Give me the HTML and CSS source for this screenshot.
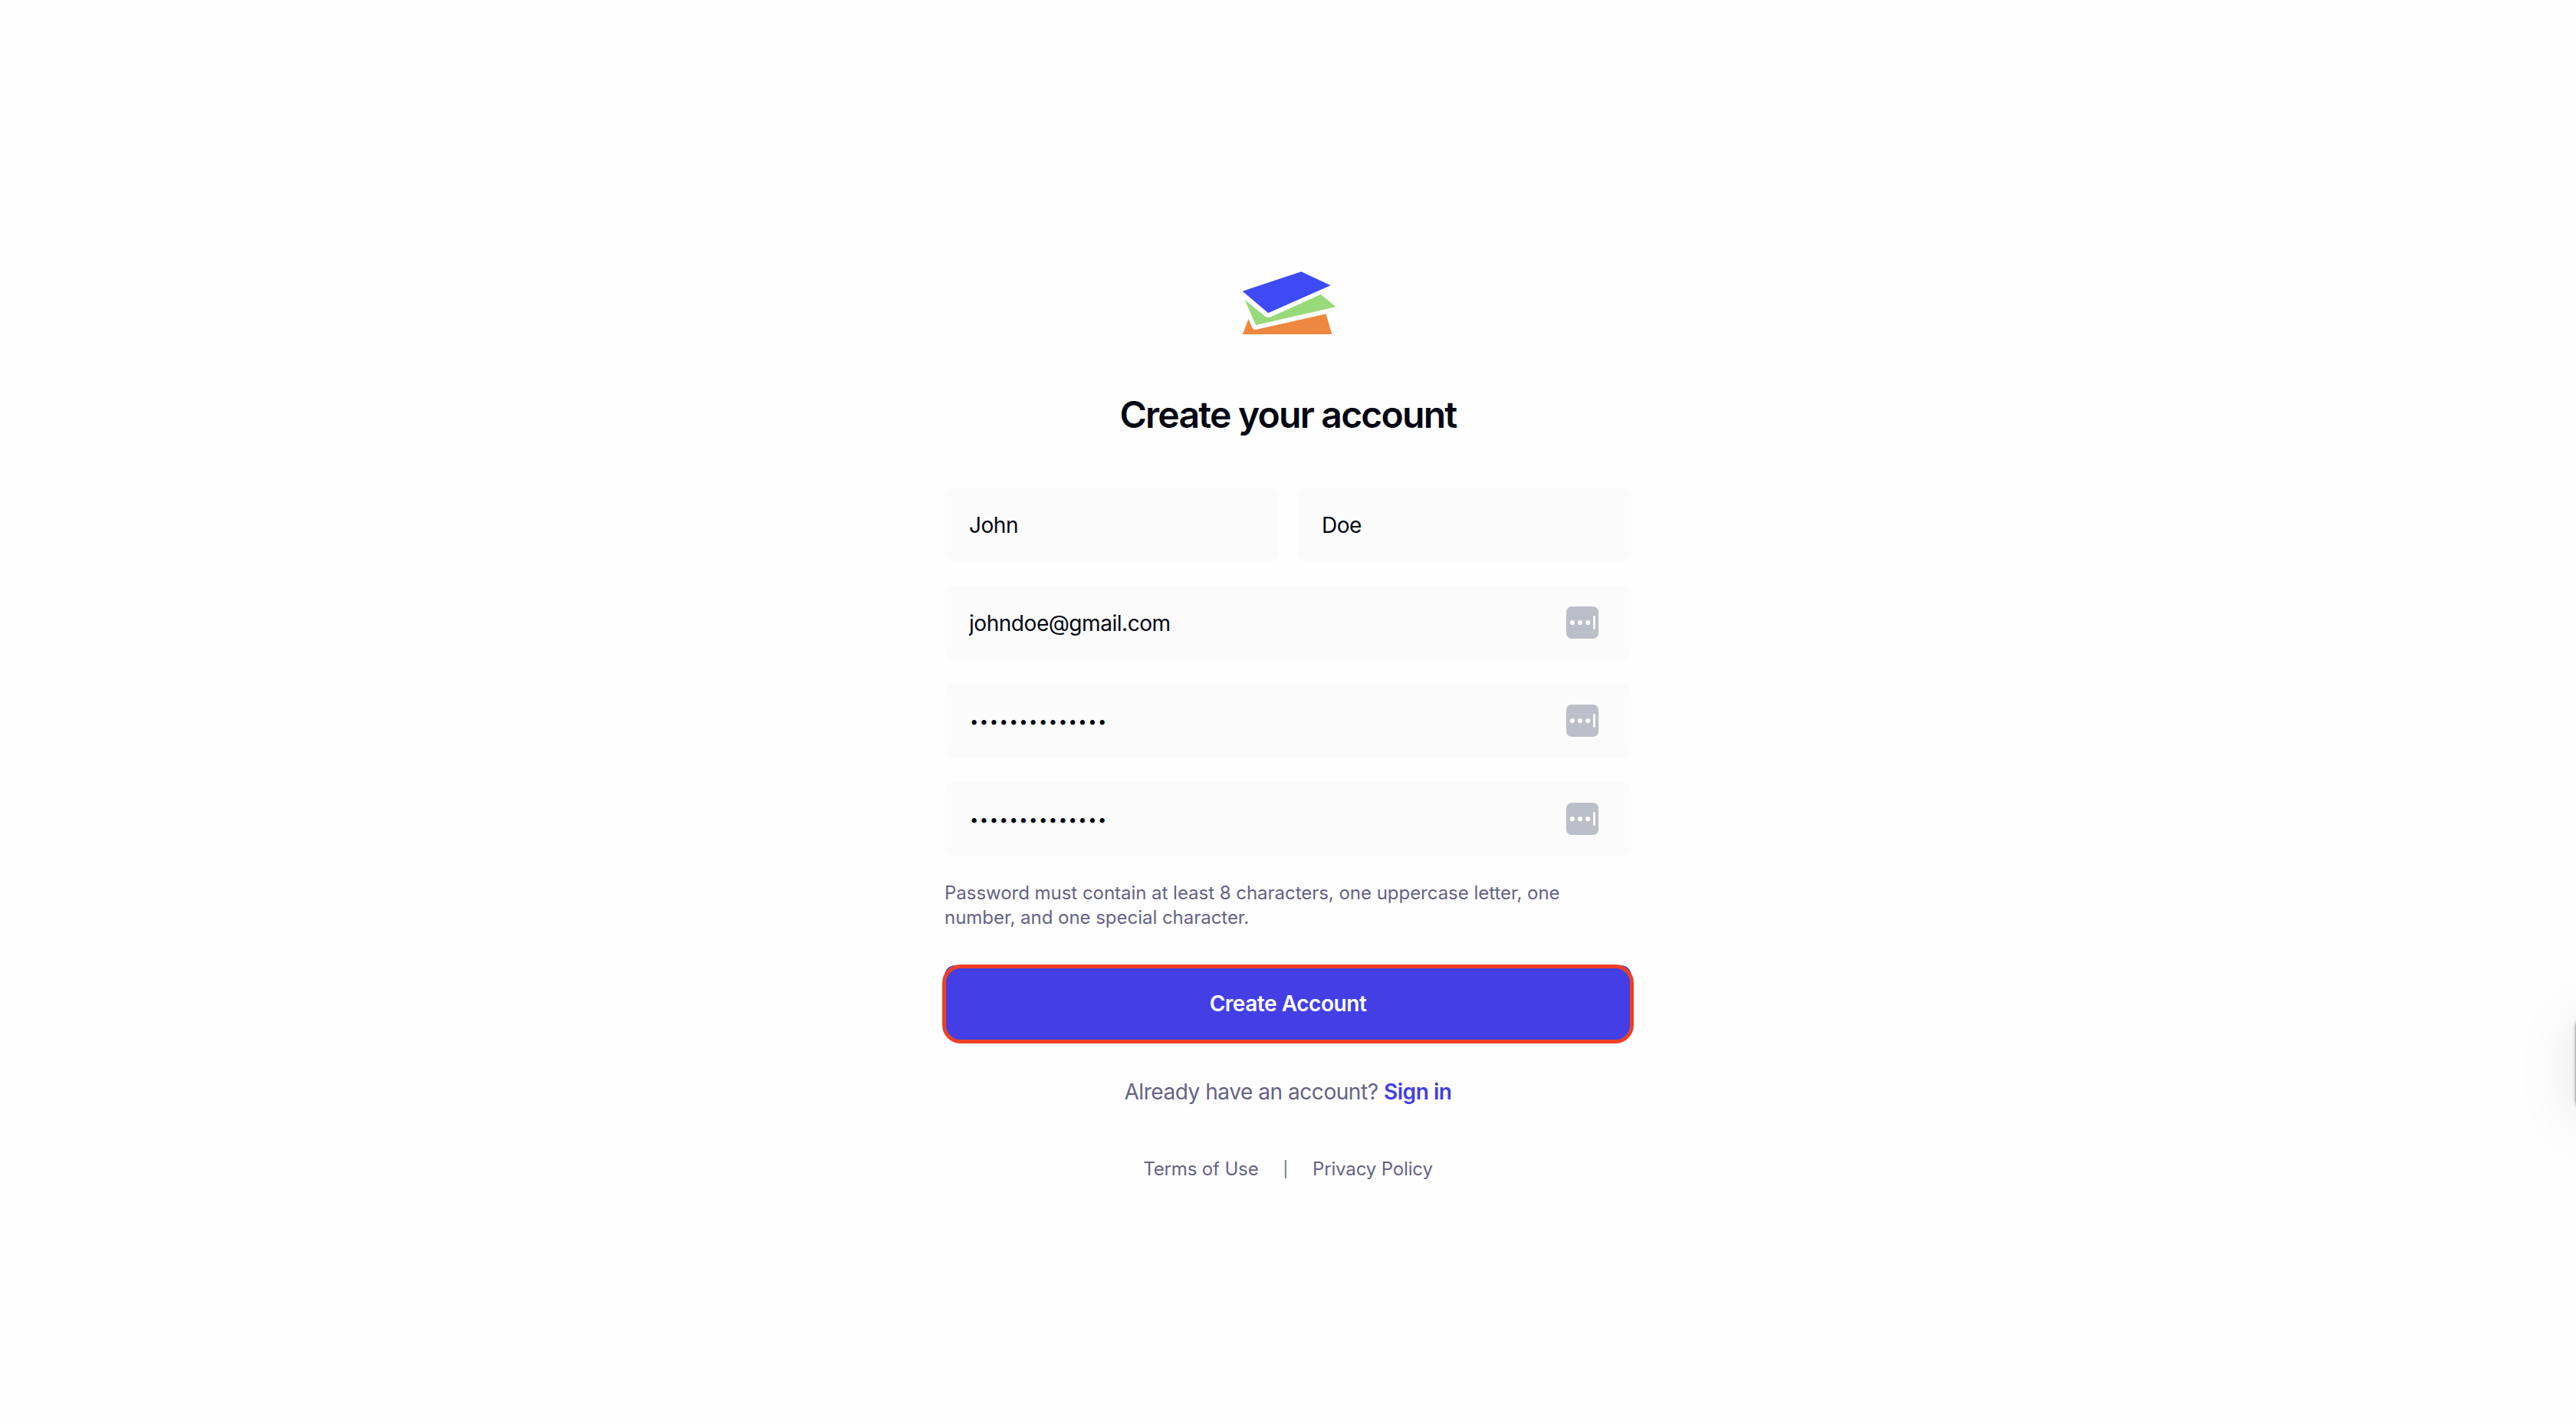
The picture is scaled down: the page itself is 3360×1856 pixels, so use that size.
FILE: index.html
```html
<!DOCTYPE html>
<html lang="en">
<head>
  <meta charset="UTF-8" />
  <meta name="viewport" content="width=device-width, initial-scale=1.0" />
  <title>Create your account</title>
  <link rel="stylesheet" href="styles.css">
</head>
<body>
  <main class="signup">
    <svg class="logo" viewBox="0 0 160 110" aria-hidden="true">
      <path fill="#ee873f" d="M28.5 76 32.8 86.5Q34.8 91 40 89.5L129.5 69.5 137.3 96H20.8Z" />
      <path fill="#98da79" d="M23.6 51 50 72.4Q54 75.4 58.5 73L122.8 44 142.3 60.3 38 84Z" />
      <path fill="#3d4af5" stroke="#3d4af5" stroke-linejoin="round" d="M21.5 40 97.3 14.8 134.5 32.2 54.2 67.7Z" />
    </svg>
    <h1>Create your account</h1>

    <form id="signupForm">
      <div class="row">
        <input class="field" type="text" value="John" aria-label="First name" />
        <input class="field" type="text" value="Doe" aria-label="Last name" />
      </div>
      <div class="field-wrap">
        <input class="field" type="text" value="johndoe@gmail.com" aria-label="Email" />
        <svg class="autofill" viewBox="0 0 42 42"><rect width="42" height="42" rx="7" /><circle cx="7.8" cy="21" r="3.1" /><circle cx="18" cy="21" r="3.1" /><circle cx="28.2" cy="21" r="3.1" /><path d="M36.4 13.4v15.4" /></svg>
      </div>
      <div class="field-wrap">
        <input class="field password" type="password" value="Password123!ab" aria-label="Password" />
        <svg class="autofill" viewBox="0 0 42 42"><rect width="42" height="42" rx="7" /><circle cx="7.8" cy="21" r="3.1" /><circle cx="18" cy="21" r="3.1" /><circle cx="28.2" cy="21" r="3.1" /><path d="M36.4 13.4v15.4" /></svg>
      </div>
      <div class="field-wrap">
        <input class="field password" type="password" value="Password123!ab" aria-label="Confirm password" />
        <svg class="autofill" viewBox="0 0 42 42"><rect width="42" height="42" rx="7" /><circle cx="7.8" cy="21" r="3.1" /><circle cx="18" cy="21" r="3.1" /><circle cx="28.2" cy="21" r="3.1" /><path d="M36.4 13.4v15.4" /></svg>
      </div>
      <p class="hint">Password must contain at least 8 characters, one uppercase letter, one number, and one special character.</p>
      <button type="submit" class="button-primary">Create Account</button>
    </form>

    <p class="signin">Already have an account? <a href="#">Sign in</a></p>
    <div class="legal">
      <a href="#">Terms of Use</a>
      <span>|</span>
      <a href="#">Privacy Policy</a>
    </div>
  </main>
  <div class="side-tab"></div>
</body>
</html>
```
FILE: styles.css
```css
* {
  box-sizing: border-box;
}
body {
  margin: 0;
  height: 100vh;
  overflow: hidden;
  background: #fefefe;
  color: #030712;
  font-family: 'Inter', sans-serif;
}
.signup {
  width: 896px;
  margin: 0 auto;
  padding-top: 340px;
}
.logo {
  display: block;
  width: 160px;
  height: 110px;
  margin: 0 auto;
}
h1 {
  margin: 59px 0 63px;
  font-size: 48px;
  line-height: 64px;
  font-weight: 620;
  letter-spacing: -1.75px;
  text-align: center;
}
form {
  display: flex;
  flex-direction: column;
  gap: 32px;
}
.row {
  display: flex;
  gap: 24px;
}
.field {
  display: block;
  width: 100%;
  height: 96px;
  padding: 2px 32px 0;
  border: none;
  border-radius: 12px;
  background: #fbfbfb;
  color: #030712;
  font: 400 28px 'Inter', sans-serif;
  letter-spacing: -0.45px;
}
.password {
  padding: 2px 33px 0;
  font-size: 20px;
  letter-spacing: 1.6px;
}
.field-wrap {
  position: relative;
}
.autofill {
  position: absolute;
  top: 27px;
  right: 43px;
  width: 42px;
  height: 42px;
}
.autofill rect {
  fill: #bbbfc9;
}
.autofill circle {
  fill: white;
}
.autofill path {
  stroke: white;
  stroke-width: 2.6;
  stroke-linecap: round;
}
.hint {
  margin: 0;
  padding-top: 1px;
  font-size: 24px;
  line-height: 32px;
  letter-spacing: -0.03px;
  color: #656385;
}
.button-primary {
  position: relative;
  height: 100px;
  margin-top: 14px;
  border: none;
  border-radius: 14px 14px 24px 24px;
  background: #433fe5;
  color: white;
  font: 600 28px 'Inter', sans-serif;
  letter-spacing: -0.45px;
}
.button-primary::after {
  content: '';
  position: absolute;
  inset: -1px -3px -2px;
  border: 5px solid #ec4026;
  border-radius: 24px;
}
.signin {
  margin: 45px 0 0;
  font-size: 28px;
  line-height: 40px;
  letter-spacing: -0.45px;
  text-align: center;
  color: #656385;
}
.signin a {
  color: #433fe5;
  font-weight: 600;
  text-decoration: none;
}
.legal {
  display: flex;
  justify-content: center;
  gap: 32px;
  margin-top: 65px;
  font-size: 24px;
  line-height: 32px;
  letter-spacing: -0.15px;
  color: #656385;
}
.legal a {
  color: inherit;
  text-decoration: none;
}
.legal span {
  font-size: 20px;
}
.side-tab {
  position: fixed;
  top: 1324px;
  right: -99px;
  width: 100px;
  height: 126px;
  border-radius: 16px;
  background: #b5b5b5;
  box-shadow: 0 0 4px rgba(0, 0, 0, 0.3), 0 8px 80px rgba(0, 0, 0, 0.1);
}
```
